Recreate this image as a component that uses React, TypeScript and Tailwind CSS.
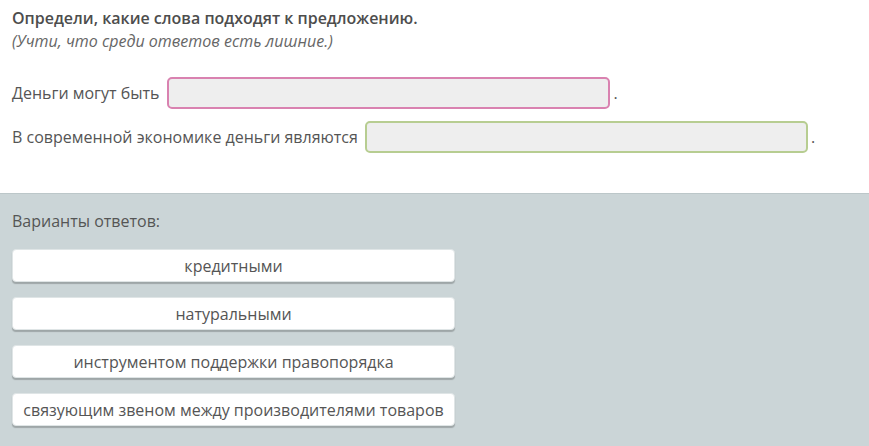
import React from "react";

export default function App() {
  const answers = [
    "кредитными",
    "натуральными",
    "инструментом поддержки правопорядка",
    "связующим звеном между производителями товаров",
  ];
  return (
    <div
      className="w-[869px] h-[446px] bg-white text-[#555] text-[16px] overflow-hidden"
      style={{ fontFamily: '"Open Sans", "Noto Sans", sans-serif' }}
    >
      <div className="px-3 pt-[7px] pb-[40px]">
        <div className="font-semibold leading-[23px] text-[#4d4d4d]">
          Определи, какие слова подходят к предложению.
        </div>
        <div className="italic leading-[23px] text-[#666]">
          (Учти, что среди ответов есть лишние.)
        </div>
        <div className="mt-[24px] flex items-center">
          <span>Деньги могут быть</span>
          <div className="ml-[8px] w-[443px] h-[32px] rounded-[5px] border-2 border-[#d982b0] bg-[#eeeeee]" />
          <span className="ml-[3px]">.</span>
        </div>
        <div className="mt-[12px] flex items-center">
          <span>В современной экономике деньги являются</span>
          <div className="ml-[7px] w-[443px] h-[32px] rounded-[5px] border-2 border-[#b7cd91] bg-[#eeeeee]" />
          <span className="ml-[3px]">.</span>
        </div>
      </div>
      <div className="border-t border-[#bcc7c9] bg-[#cbd5d7] h-[260px] px-3 pt-[15px]">
        <div className="leading-[24px]">Варианты ответов:</div>
        <div className="mt-[16px] flex flex-col gap-[15px]">
          {answers.map((a) => (
            <div
              key={a}
              className="w-[443px] h-[33px] flex items-center justify-center bg-white rounded-[4px] border border-[#dfe5e6] shadow-[0_2px_1px_rgba(0,0,0,0.22)]"
            >
              {a}
            </div>
          ))}
        </div>
      </div>
    </div>
  );
}
